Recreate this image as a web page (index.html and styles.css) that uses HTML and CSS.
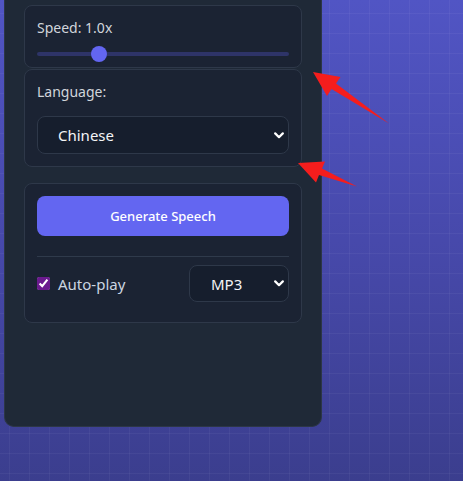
FILE: index.html
```html
<!DOCTYPE html>
<html lang="en">
<head>
  <meta charset="UTF-8">
  <meta name="viewport" content="width=device-width, initial-scale=1.0">
  <title>Text to Speech</title>
  <link rel="stylesheet" href="styles.css">
</head>
<body>

  <div id="panel">
    <!-- 속도 설정 -->
    <div class="card card-speed">
      <label for="speed" class="field-label">Speed: <span id="speedValue">1.0</span>x</label>
      <input type="range" id="speed" min="0.1" max="4" step="0.1" value="1.0">
    </div>

    <!-- 언어 선택 -->
    <div class="card card-language">
      <label for="language" class="field-label">Language:</label>
      <select id="language" class="dark-select">
        <option>English</option>
        <option selected>Chinese</option>
        <option>Japanese</option>
        <option>Korean</option>
      </select>
    </div>

    <div class="card card-actions">
      <button id="generateBtn">Generate Speech</button>
      <div class="divider"></div>
      <div class="options-row">
        <label class="autoplay">
          <input type="checkbox" id="autoplay" checked>
          <span>Auto-play</span>
        </label>
        <select id="format" class="dark-select format-select">
          <option selected>MP3</option>
          <option>WAV</option>
          <option>OGG</option>
        </select>
      </div>
    </div>
  </div>

  <!-- 카드 사이 간격 표시 화살표 -->
  <svg class="markers" width="463" height="481" viewBox="0 0 463 481">
    <polygon points="313,72 340.5,77 336,83.5 389,123.5 331.5,89 327,96" />
    <polygon points="298,163 325,161.5 322,168.5 357,186.5 319,175 316,182.5" />
  </svg>

  <script>
    const speed = document.getElementById('speed');
    const speedValue = document.getElementById('speedValue');

    speed.addEventListener('input', () => {
      speedValue.textContent = parseFloat(speed.value).toFixed(1);
    });
  </script>

</body>
</html>
```

FILE: styles.css
```css
body {
  font-family: "Segoe UI", "Noto Sans", "Open Sans", sans-serif;
  margin: 0;
  height: 100vh;
  overflow: hidden;
  position: relative;
  background-color: #4648a8;
  background-image:
    linear-gradient(rgba(255, 255, 255, 0.045) 1px, transparent 1px),
    linear-gradient(90deg, rgba(255, 255, 255, 0.045) 1px, transparent 1px),
    linear-gradient(180deg, #5155c4 0%, #4749ab 50%, #3b3e8e 100%);
  background-size: 20px 20px, 20px 20px, 100% 100%;
  background-position: 9px 13px, 9px 13px, 0 0;
}
#panel {
  width: 318px;
  height: 427px;
  box-sizing: border-box;
  margin-left: 4px;
  padding: 5px 19px 0;
  background-color: #1f2937;
  border: 1px solid #2c3646;
  border-top: none;
  border-radius: 0 0 10px 10px;
}
.card {
  background-color: #1b2333;
  border: 1px solid #2e3849;
  border-radius: 8px;
  padding: 12px;
}
.card-speed {
  padding-bottom: 5px;
  margin-bottom: 1px;
}
.card-language {
  margin-bottom: 16px;
}
.field-label {
  display: block;
  font-size: 14px;
  line-height: 20px;
  color: #d1d5db;
}
.card-speed .field-label {
  margin-bottom: 8px;
}
.card-language .field-label {
  margin-bottom: 14px;
}
#speed {
  -webkit-appearance: none;
  appearance: none;
  display: block;
  width: 100%;
  height: 16px;
  margin: 0;
  background: transparent;
}
#speed::-webkit-slider-runnable-track {
  height: 4px;
  border-radius: 2px;
  background-color: #2e3468;
}
#speed::-webkit-slider-thumb {
  -webkit-appearance: none;
  width: 16px;
  height: 16px;
  margin-top: -6px;
  border-radius: 50%;
  background-color: #6366f1;
  border: none;
}
.dark-select {
  -webkit-appearance: none;
  appearance: none;
  display: block;
  width: 100%;
  height: 38px;
  box-sizing: border-box;
  padding: 0 24px 0 20px;
  font-family: inherit;
  font-size: 15px;
  color: #f3f4f6;
  background-color: #161e2d;
  background-image: url("data:image/svg+xml,%3Csvg xmlns='http://www.w3.org/2000/svg' width='10' height='7' viewBox='0 0 10 7'%3E%3Cpath d='M1.2 1.4 L5 5.2 L8.8 1.4' fill='none' stroke='%23ffffff' stroke-width='2.2' stroke-linecap='round' stroke-linejoin='round'/%3E%3C/svg%3E");
  background-repeat: no-repeat;
  background-position: right 4px center;
  background-size: 10px 7px;
  border: 1px solid #2e3849;
  border-radius: 8px;
  outline: none;
}
#generateBtn {
  display: block;
  width: 100%;
  height: 40px;
  font-family: inherit;
  font-size: 13px;
  font-weight: 500;
  color: #ffffff;
  background-color: #6366f1;
  border: none;
  border-radius: 8px;
  cursor: pointer;
}
.divider {
  height: 1px;
  margin: 20px 0 8px;
  background-color: #2f3a4b;
}
.options-row {
  display: flex;
  justify-content: space-between;
  align-items: center;
  padding-bottom: 8px;
}
.autoplay {
  display: flex;
  align-items: center;
  gap: 8px;
  font-size: 15px;
  color: #cbd5e1;
}
.autoplay input {
  width: 13px;
  height: 13px;
  margin: 0;
  accent-color: #6b1a8e;
}
.format-select {
  width: 100px;
  height: 37px;
  padding-left: 21px;
}
.markers {
  position: absolute;
  top: 0;
  left: 0;
  pointer-events: none;
}
.markers polygon {
  fill: #f51d1d;
}
```
